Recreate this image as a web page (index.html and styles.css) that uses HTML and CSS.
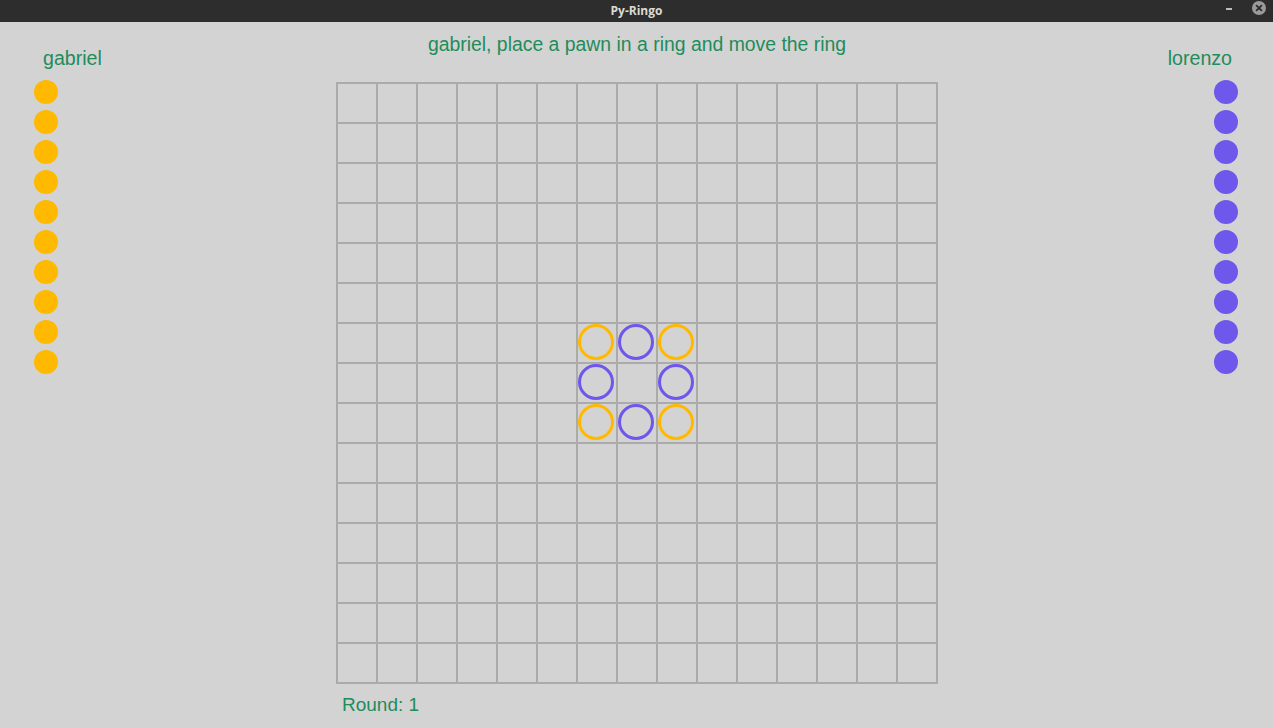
FILE: index.html
```html
<!DOCTYPE html>
<html>
<head>
<meta charset="utf-8">
<title>Py-Ringo</title>
<link rel="stylesheet" href="styles.css">
</head>
<body>
<div class="titlebar">
  <div class="tb-spacer"></div>
  <div class="tb-title">Py-Ringo</div>
  <div class="tb-controls">
    <span class="tb-min"></span>
    <span class="tb-close">
      <svg width="14" height="14" viewBox="0 0 14 14"><circle cx="7" cy="7" r="7" fill="#9a9a9a"/><path d="M4.6 4.6 L9.4 9.4 M9.4 4.6 L4.6 9.4" stroke="#2d2d2d" stroke-width="1.8" stroke-linecap="round"/></svg>
    </span>
  </div>
</div>
<div class="main">
  <div class="side side-left">
    <div class="name name-left">gabriel</div>
    <div class="pawns">
      <span class="pawn yellow"></span><span class="pawn yellow"></span><span class="pawn yellow"></span><span class="pawn yellow"></span><span class="pawn yellow"></span>
      <span class="pawn yellow"></span><span class="pawn yellow"></span><span class="pawn yellow"></span><span class="pawn yellow"></span><span class="pawn yellow"></span>
    </div>
  </div>
  <div class="center">
    <div class="message">gabriel, place a pawn in a ring and move the ring</div>
    <div class="board">
      <span class="ring ring-yellow r7 c7"></span>
      <span class="ring ring-purple r7 c8"></span>
      <span class="ring ring-yellow r7 c9"></span>
      <span class="ring ring-purple r8 c7"></span>
      <span class="ring ring-purple r8 c9"></span>
      <span class="ring ring-yellow r9 c7"></span>
      <span class="ring ring-purple r9 c8"></span>
      <span class="ring ring-yellow r9 c9"></span>
    </div>
    <div class="round">Round: 1</div>
  </div>
  <div class="side side-right">
    <div class="name name-right">lorenzo</div>
    <div class="pawns">
      <span class="pawn purple"></span><span class="pawn purple"></span><span class="pawn purple"></span><span class="pawn purple"></span><span class="pawn purple"></span>
      <span class="pawn purple"></span><span class="pawn purple"></span><span class="pawn purple"></span><span class="pawn purple"></span><span class="pawn purple"></span>
    </div>
  </div>
</div>
</body>
</html>
```
FILE: styles.css
```css
html, body {
  margin: 0;
  padding: 0;
}
body {
  width: 1273px;
  height: 728px;
  overflow: hidden;
  background: #d3d3d3;
  font-family: "Liberation Sans", Arial, sans-serif;
  color: #1f8c5b;
}
.titlebar {
  height: 22px;
  background: #2d2d2d;
  display: grid;
  grid-template-columns: 1fr auto 1fr;
  align-items: center;
}
.tb-title {
  font-family: "Open Sans", "DejaVu Sans", sans-serif;
  font-weight: 700;
  font-size: 12px;
  color: #dcdad5;
  line-height: 22px;
}
.tb-controls {
  display: flex;
  justify-content: flex-end;
  align-items: center;
  gap: 20px;
  padding-right: 7px;
  height: 22px;
}
.tb-min {
  width: 6px;
  height: 2px;
  background: #bdbdbd;
  margin-top: -4px;
}
.tb-close {
  display: block;
  width: 14px;
  height: 14px;
  margin-top: -6px;
}
.tb-close svg { display: block; }

.main {
  display: flex;
  height: 706px;
}
.side {
  display: flex;
  flex-direction: column;
  padding-top: 25px;
}
.side-left {
  width: 336px;
  box-sizing: border-box;
  padding-left: 34px;
  align-items: flex-start;
}
.side-right {
  width: 335px;
  box-sizing: border-box;
  padding-right: 35px;
  align-items: flex-end;
}
.name {
  font-size: 19.6px;
  line-height: 23px;
}
.name-left { margin-left: 9px; }
.name-right { margin-right: 6px; }
.pawns {
  display: flex;
  flex-direction: column;
  gap: 6px;
  margin-top: 10px;
}
.pawn {
  display: block;
  width: 24px;
  height: 24px;
  border-radius: 50%;
}
.yellow { background: #ffb900; }
.purple { background: #6e57eb; }

.center {
  width: 602px;
  padding-top: 11px;
  display: flex;
  flex-direction: column;
}
.message {
  font-size: 19.4px;
  line-height: 23px;
  text-align: center;
}
.board {
  margin-top: 26px;
  width: 602px;
  height: 602px;
  box-sizing: border-box;
  padding: 2px;
  display: grid;
  grid-template-columns: repeat(15, 38px);
  grid-template-rows: repeat(15, 38px);
  gap: 2px;
  background:
    linear-gradient(90deg, #ababab 2px, transparent 2px) 0 0 / 40px 40px,
    linear-gradient(180deg, #ababab 2px, transparent 2px) 0 0 / 40px 40px;
}
.ring {
  width: 36px;
  height: 36px;
  box-sizing: border-box;
  border-radius: 50%;
  border: 3px solid;
  align-self: start;
  justify-self: start;
}
.ring-yellow { border-color: #ffb900; }
.ring-purple { border-color: #6e57eb; }
.r7 { grid-row: 7; }
.r8 { grid-row: 8; }
.r9 { grid-row: 9; }
.c7 { grid-column: 7; }
.c8 { grid-column: 8; }
.c9 { grid-column: 9; }
.round {
  margin-top: 9px;
  padding-left: 6px;
  font-size: 19px;
  line-height: 23px;
}
```
